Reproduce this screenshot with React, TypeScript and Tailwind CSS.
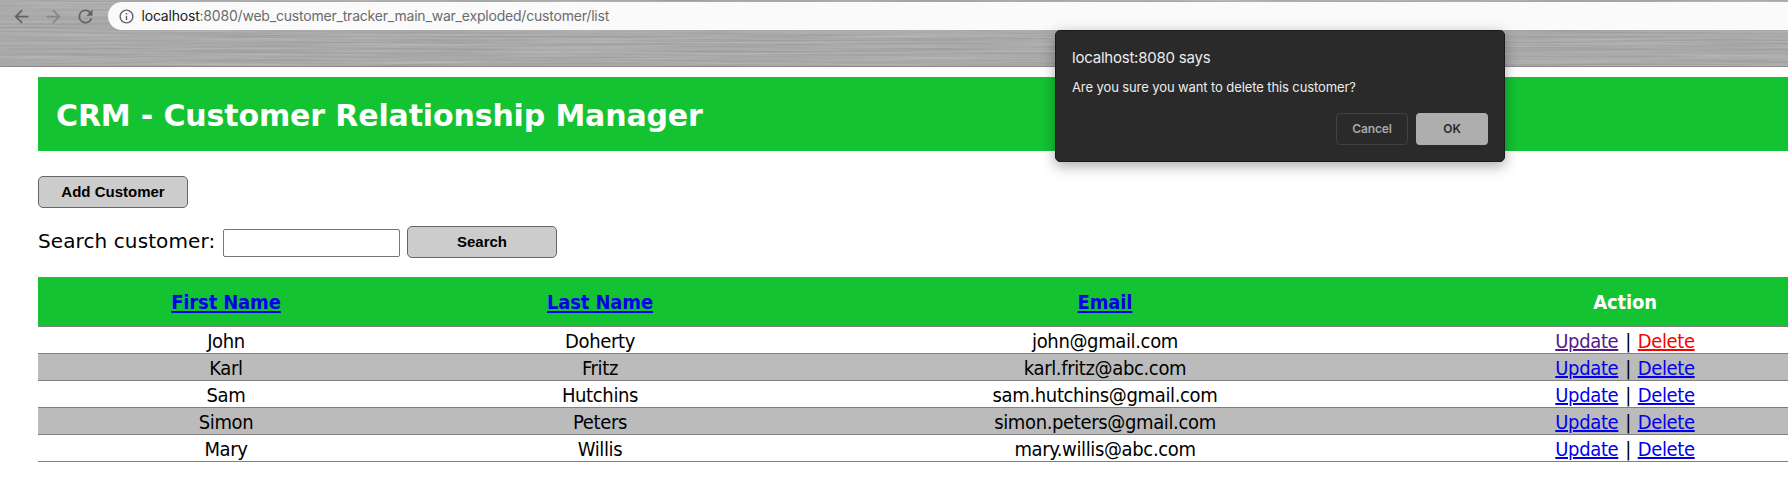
type Customer = { first: string; last: string; email: string; updateClass: string; deleteClass: string };

const LINK = "text-[#0000ee]";

const customers: Customer[] = [
  { first: "John", last: "Doherty", email: "john@gmail.com", updateClass: "text-[#551a8b]", deleteClass: "text-[#ff0000]" },
  { first: "Karl", last: "Fritz", email: "karl.fritz@abc.com", updateClass: LINK, deleteClass: LINK },
  { first: "Sam", last: "Hutchins", email: "sam.hutchins@gmail.com", updateClass: LINK, deleteClass: LINK },
  { first: "Simon", last: "Peters", email: "simon.peters@gmail.com", updateClass: LINK, deleteClass: LINK },
  { first: "Mary", last: "Willis", email: "mary.willis@abc.com", updateClass: LINK, deleteClass: LINK },
];

const COLUMNS = "grid w-[1788px] grid-cols-[376px_372px_638px_402px] border-b border-[#808080]";
const HEAD_LINK = "text-[#0000ee] underline decoration-[2px] underline-offset-[2px]";
const ROW_LINK = "underline decoration-[1.5px] underline-offset-[1px]";

function BrushedMetal() {
  return (
    <svg className="absolute inset-0 h-full w-full" preserveAspectRatio="none" aria-hidden="true">
      <filter id="brushed" x="0" y="0" width="100%" height="100%" colorInterpolationFilters="sRGB">
        <feTurbulence type="fractalNoise" baseFrequency="0.006 0.55" numOctaves="3" seed="7" />
        <feColorMatrix values="0.15 0 0 0 0.59  0.15 0 0 0 0.59  0.15 0 0 0 0.59  0 0 0 0 1" />
      </filter>
      <rect width="100%" height="100%" filter="url(#brushed)" />
    </svg>
  );
}

function Toolbar() {
  return (
    <header className="relative h-[67px] overflow-hidden border-b border-[#8e8a8c] bg-[#aaaaaa]">
      <BrushedMetal />
      <div className="relative flex h-8 items-center">
        <div className="flex items-center gap-[11px] pl-[11px]">
          <svg className="size-[21px]" viewBox="0 0 24 24" fill="#5f6368">
            <path d="M20 11H7.83l5.59-5.59L12 4l-8 8 8 8 1.41-1.41L7.83 13H20v-2z" />
          </svg>
          <svg className="size-[21px]" viewBox="0 0 24 24" fill="#858688">
            <path d="M12 4l-1.41 1.41L16.17 11H4v2h12.17l-5.58 5.59L12 20l8-8z" />
          </svg>
          <svg className="size-[21px]" viewBox="0 0 24 24" fill="#5f6368">
            <path d="M17.65 6.35A7.95 7.95 0 0 0 12 4a8 8 0 1 0 7.73 10h-2.08A6 6 0 1 1 12 6c1.66 0 3.14.69 4.22 1.78L13 11h7V4l-2.35 2.35z" />
          </svg>
        </div>
        <div className="ml-[12px] flex h-7 flex-1 items-center rounded-l-full bg-[#fafafa] pl-[9.5px]">
          <svg className="size-[17px]" viewBox="0 0 24 24" fill="#5f6368">
            <path d="M11 7h2v2h-2V7zm0 4h2v6h-2v-6zm1-9a10 10 0 1 0 0 20 10 10 0 0 0 0-20zm0 18a8 8 0 1 1 0-16 8 8 0 0 1 0 16z" />
          </svg>
          <span className="ml-[7px] whitespace-nowrap font-[Inter,sans-serif] text-[14px] leading-5 tracking-[-0.2px] text-[#6a6b6e]">
            <span className="text-[#202124]">localhost</span>:8080/web_customer_tracker_main_war_exploded/customer/list
          </span>
        </div>
      </div>
    </header>
  );
}

function ConfirmDialog() {
  return (
    <div
      role="dialog"
      className="absolute left-[1055px] top-[30px] h-[132px] w-[450px] rounded-[5px] border border-[#1a1a1c] bg-[#2a2a2a] px-4 pt-[17px] font-[Inter,sans-serif] text-[#ececec] shadow-[0_4px_14px_rgba(0,0,0,0.34)]"
    >
      <p className="text-[15px] leading-5 tracking-[-0.22px]">localhost:8080 says</p>
      <p className="mt-[9px] text-[13px] leading-5 tracking-[-0.1px]">Are you sure you want to delete this customer?</p>
      <div className="mt-[16px] flex justify-end gap-2 text-[12px] font-semibold tracking-[-0.1px]">
        <button className="h-8 w-[72px] rounded-[4px] border border-[#414141] text-[#a8a8a8]">Cancel</button>
        <button className="h-8 w-[72px] rounded-[4px] bg-[#aeaeae] text-[#2a2a2a]">OK</button>
      </div>
    </div>
  );
}

const BUTTON =
  "h-8 w-[150px] rounded-[5px] border border-[#666666] bg-[#cccccc] font-['Liberation_Sans',Arial,sans-serif] text-[15px] font-bold leading-5";

export default function App() {
  return (
    <div className="relative h-[482px] overflow-hidden bg-white text-black">
      <Toolbar />
      <main className="pl-[38px] pt-[10px] font-['DejaVu_Sans',Verdana,sans-serif]">
        <div className="flex h-[74px] items-center bg-[#13c332] pl-[18px] pt-[4px]">
          <h1 className="whitespace-nowrap text-[30px] font-bold leading-9 tracking-[-0.14px] text-white">
            CRM - Customer Relationship Manager
          </h1>
        </div>
        <button className={`mt-[25px] block ${BUTTON}`}>Add Customer</button>
        <form className="mt-[18px] flex h-8 items-start">
          <label className="w-[185px] whitespace-nowrap pt-[1px] text-[20px] leading-7 tracking-[0.1px]">Search customer:</label>
          <input className="mt-[3px] h-7 w-[177px] rounded-[2px] border border-[#767676] bg-white" />
          <button type="button" className={`ml-[7px] ${BUTTON}`}>Search</button>
        </form>
        <section className="mt-[19px] border-t border-[#808080] text-center font-['DejaVu_Sans_Condensed','DejaVu_Sans',Tahoma,sans-serif] text-[20px]">
          <div className={`${COLUMNS} h-[49px] items-center bg-[#13c332] font-bold tracking-[-0.15px]`}>
            <div><a className={HEAD_LINK}>First Name</a></div>
            <div><a className={HEAD_LINK}>Last Name</a></div>
            <div><a className={HEAD_LINK}>Email</a></div>
            <div className="text-white">Action</div>
          </div>
          {customers.map((c) => (
            <div key={c.email} className={`${COLUMNS} h-[27px] leading-[29px] tracking-[-0.36px] odd:bg-[#bbbbbb]`}>
              <div>{c.first}</div>
              <div>{c.last}</div>
              <div>{c.email}</div>
              <div className="[word-spacing:1.5px]">
                <a className={`${ROW_LINK} ${c.updateClass}`}>Update</a> | <a className={`${ROW_LINK} ${c.deleteClass}`}>Delete</a>
              </div>
            </div>
          ))}
        </section>
      </main>
      <ConfirmDialog />
    </div>
  );
}
